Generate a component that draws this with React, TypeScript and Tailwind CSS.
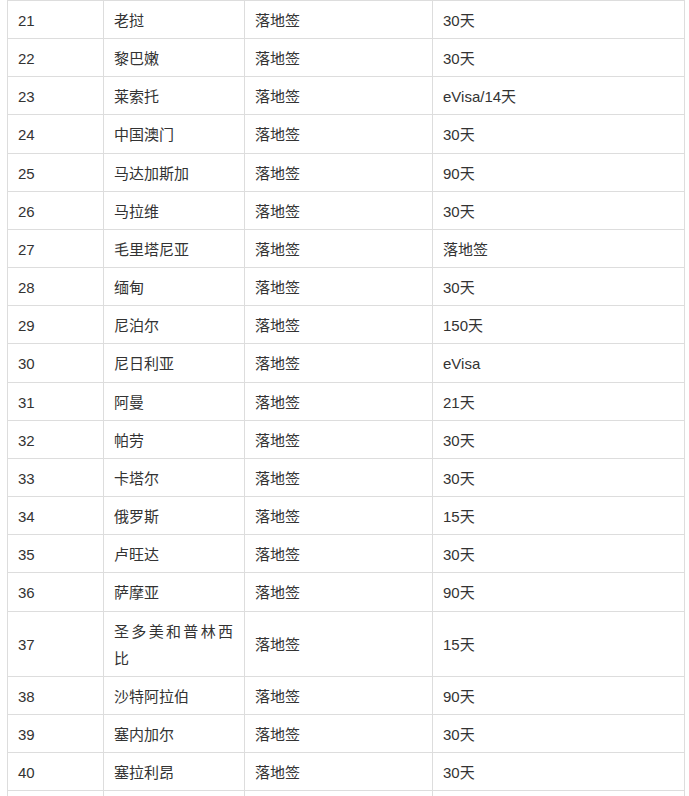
const rows: [string, string, string, string][] = [
  ["21", "老挝", "落地签", "30天"],
  ["22", "黎巴嫩", "落地签", "30天"],
  ["23", "莱索托", "落地签", "eVisa/14天"],
  ["24", "中国澳门", "落地签", "30天"],
  ["25", "马达加斯加", "落地签", "90天"],
  ["26", "马拉维", "落地签", "30天"],
  ["27", "毛里塔尼亚", "落地签", "落地签"],
  ["28", "缅甸", "落地签", "30天"],
  ["29", "尼泊尔", "落地签", "150天"],
  ["30", "尼日利亚", "落地签", "eVisa"],
  ["31", "阿曼", "落地签", "21天"],
  ["32", "帕劳", "落地签", "30天"],
  ["33", "卡塔尔", "落地签", "30天"],
  ["34", "俄罗斯", "落地签", "15天"],
  ["35", "卢旺达", "落地签", "30天"],
  ["36", "萨摩亚", "落地签", "90天"],
  ["37", "圣多美和普林西比", "落地签", "15天"],
  ["38", "沙特阿拉伯", "落地签", "90天"],
  ["39", "塞内加尔", "落地签", "30天"],
  ["40", "塞拉利昂", "落地签", "30天"],
  ["\u00a0", "\u00a0", "\u00a0", "\u00a0"],
];

const cell =
  "border border-[#dddddd] pl-[10px] pt-[6px] pb-[4px] align-middle text-justify";

export default function App() {
  return (
    <div className="min-h-screen bg-white pl-[7px] font-['Liberation_Sans','Noto_Sans_CJK_SC',sans-serif] text-[15px] leading-[27.15px] text-[#333333]">
      <table className="w-[677px] table-fixed border-collapse">
        <colgroup>
          <col className="w-[96px]" />
          <col className="w-[141px]" />
          <col className="w-[188px]" />
          <col className="w-[252px]" />
        </colgroup>
        <tbody>
          {rows.map(([no, country, type, stay], i) => (
            <tr key={i}>
              <td className={`${cell} pr-[10px]`}>{no}</td>
              <td className={`${cell} pr-[11px]`}>{country}</td>
              <td className={`${cell} pr-[10px]`}>{type}</td>
              <td className={`${cell} pr-[10px]`}>{stay}</td>
            </tr>
          ))}
        </tbody>
      </table>
    </div>
  );
}
